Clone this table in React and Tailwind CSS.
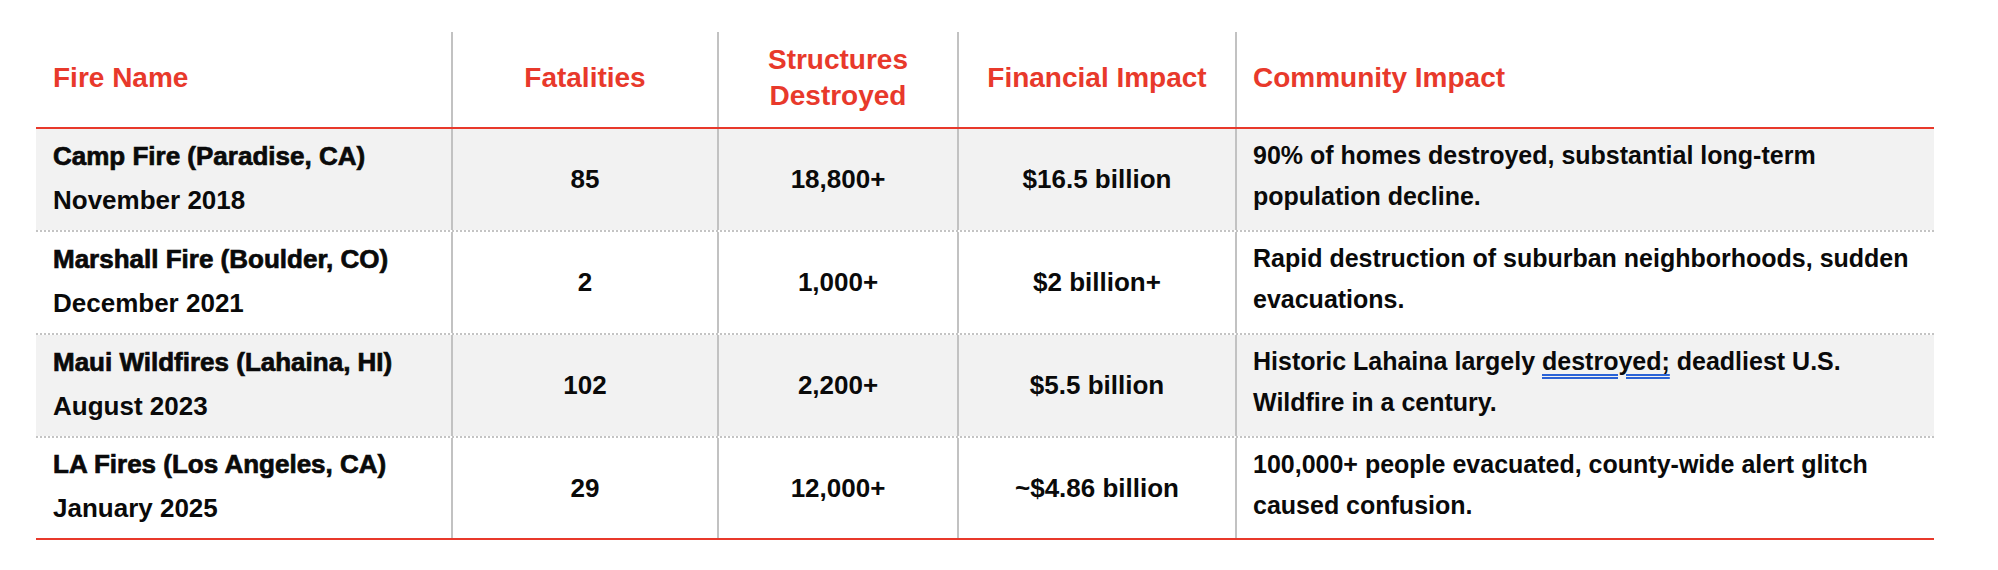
const fires = [
  {
    name: "Camp Fire (Paradise, CA)",
    date: "November 2018",
    deaths: "85",
    structures: "18,800+",
    cost: "$16.5 billion",
    impact: <>90% of homes destroyed, substantial long-term population decline.</>,
    shaded: true,
  },
  {
    name: "Marshall Fire (Boulder, CO)",
    date: "December 2021",
    deaths: "2",
    structures: "1,000+",
    cost: "$2 billion+",
    impact: <>Rapid destruction of suburban neighborhoods, sudden evacuations.</>,
  },
  {
    name: "Maui Wildfires (Lahaina, HI)",
    date: "August 2023",
    deaths: "102",
    structures: "2,200+",
    cost: "$5.5 billion",
    impact: (
      <>
        Historic Lahaina largely{" "}
        <span className="underline decoration-double decoration-[#2a62d6] decoration-[1.5px] underline-offset-[4px]">
          destroyed;
        </span>{" "}
        deadliest U.S. Wildfire in a century.
      </>
    ),
    shaded: true,
  },
  {
    name: "LA Fires (Los Angeles, CA)",
    date: "January 2025",
    deaths: "29",
    structures: "12,000+",
    cost: "~$4.86 billion",
    impact: <>100,000+ people evacuated, county-wide alert glitch caused confusion.</>,
  },
]

const cols = "grid grid-cols-[415px_266px_240px_278px_699px]"
const divider = "border-l-2 border-[#c2c2c2]"

export default function App() {
  return (
    <div className="min-h-screen bg-white pl-[36px] pt-[32px] font-['Liberation_Sans',Arial,sans-serif] font-bold text-[#0a0a0a]">
      <div className="w-[1898px]">
        {/* Header */}
        <div className={`${cols} h-[97px] border-b-2 border-[#e8392b] text-[28px] leading-[36px] text-[#e8392b]`}>
          <div className="flex items-center pb-[3px] pl-[17px]">Fire Name</div>
          <div className={`${divider} flex items-center justify-center pb-[3px] text-center`}>Fatalities</div>
          <div className={`${divider} flex items-center justify-center px-6 pb-[3px] text-center`}>Structures Destroyed</div>
          <div className={`${divider} flex items-center justify-center pb-[3px] text-center`}>Financial Impact</div>
          <div className={`${divider} flex items-center pb-[3px] pl-4`}>Community Impact</div>
        </div>

        {/* Rows */}
        {fires.map((f, i) => {
          const last = i === fires.length - 1
          const bg = f.shaded ? "bg-[#f2f2f2]" : "bg-white"
          return (
            <div
              key={f.name}
              className={`${cols} ${
                last ? "h-[102px] border-b-2 border-[#e8392b]" : "h-[103px] border-b-2 border-dotted border-[#c4c4c4]"
              }`}
            >
              <div className={`${bg} flex flex-col justify-center pb-[4px] pl-[17px] text-[26px] leading-[44px]`}>
                <div className="[-webkit-text-stroke:0.7px_#0a0a0a]">{f.name}</div>
                <div>{f.date}</div>
              </div>
              <div className={`${bg} ${divider} flex items-center justify-center text-[26px]`}>{f.deaths}</div>
              <div className={`${bg} ${divider} flex items-center justify-center text-[26px]`}>{f.structures}</div>
              <div className={`${bg} ${divider} flex items-center justify-center text-[26px]`}>{f.cost}</div>
              <div className={`${bg} ${divider} flex items-center pb-[7px] pl-4 pr-4 text-[25px] leading-[41px]`}>
                <p>{f.impact}</p>
              </div>
            </div>
          )
        })}
      </div>
    </div>
  )
}
